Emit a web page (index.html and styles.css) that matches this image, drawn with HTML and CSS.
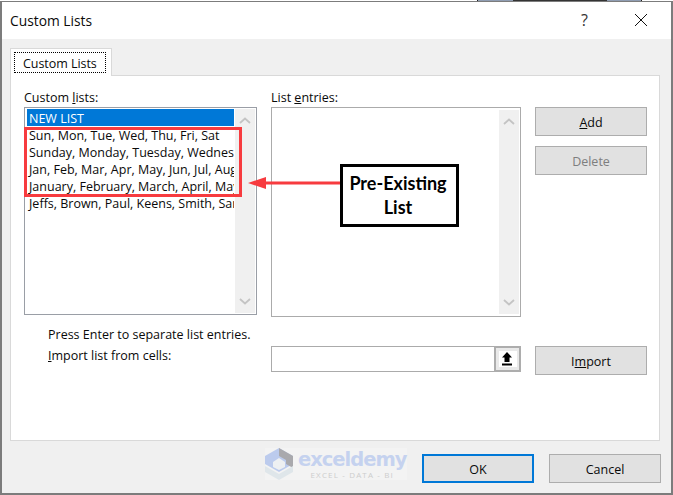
FILE: index.html
```html
<!DOCTYPE html>
<html lang="en">
<head>
<meta charset="utf-8">
<title>Custom Lists</title>
<link rel="stylesheet" href="styles.css">
</head>
<body>
<div class="peek"><span></span></div>
<div class="window">
  <header class="titlebar">
    <span class="title">Custom Lists</span>
    <span class="help">?</span>
    <svg class="close" width="12" height="12" viewBox="0 0 12 12"><path d="M0 0L12 12M12 0L0 12" stroke="#111" stroke-width="1" fill="none"/></svg>
  </header>
  <main class="body">
    <div class="tabstrip"><div class="tab"><span class="tab-focus">Custom Lists</span></div></div>
    <section class="panel">
      <div class="columns">
        <div class="col-lists">
          <label class="field-label">Custom <u>l</u>ists:</label>
          <div class="listbox">
            <ul class="items">
              <li class="selected">NEW LIST</li>
              <li>Sun, Mon, Tue, Wed, Thu, Fri, Sat</li>
              <li>Sunday, Monday, Tuesday, Wednesday, Thursday</li>
              <li>Jan, Feb, Mar, Apr, May, Jun, Jul, Aug, Sep</li>
              <li>January, February, March, April, May, June</li>
              <li>Jeffs, Brown, Paul, Keens, Smith, Sarah</li>
            </ul>
            <div class="scrollbar">
              <svg width="12" height="7" viewBox="0 0 12 7"><path d="M1 6L6 1.5L11 6" stroke="#c4c4c4" stroke-width="1.8" fill="none"/></svg>
              <svg width="12" height="7" viewBox="0 0 12 7"><path d="M1 1L6 5.5L11 1" stroke="#c4c4c4" stroke-width="1.8" fill="none"/></svg>
            </div>
          </div>
        </div>
        <div class="col-entries">
          <label class="field-label">List <u>e</u>ntries:</label>
          <div class="listbox entries">
            <div class="items"></div>
            <div class="scrollbar">
              <svg width="12" height="7" viewBox="0 0 12 7"><path d="M1 6L6 1.5L11 6" stroke="#c4c4c4" stroke-width="1.8" fill="none"/></svg>
              <svg width="12" height="7" viewBox="0 0 12 7"><path d="M1 1L6 5.5L11 1" stroke="#c4c4c4" stroke-width="1.8" fill="none"/></svg>
            </div>
          </div>
        </div>
        <div class="col-buttons">
          <button class="btn"><u>A</u>dd</button>
          <button class="btn disabled">Delete</button>
        </div>
      </div>
      <div class="import-row">
        <div class="import-notes">
          <p>Press Enter to separate list entries.</p>
          <p><u>I</u>mport list from cells:</p>
        </div>
        <div class="range-input">
          <span class="range-btn">
            <span class="range-face">
              <svg width="10" height="14" viewBox="0 0 10 14"><path d="M5 0L10 5.500H7.500V10H2.500V5.500H0Z" fill="#000"/><rect x="0" y="11.500" width="10" height="2" fill="#000"/></svg>
            </span>
          </span>
        </div>
        <button class="btn">I<u>m</u>port</button>
      </div>
    </section>
    <footer class="footer">
      <div class="watermark">
        <svg width="28" height="32" viewBox="0 0 28 32"><path d="M14 0L28 8V16L14 24L0 16V8Z" fill="#bccbed"/><path d="M14 0L28 8V20L21 16V12L14 8Z" fill="#a9a9ad"/><path d="M0 18L14 26L28 18V24L14 32L0 24Z" fill="#dfe6ea"/><path d="M14 10L20 14V19L14 22L8 19V14Z" fill="#eef0f2"/></svg>
        <div class="wm-text">
          <span class="wm-name">exceldemy</span>
          <span class="wm-sub">EXCEL - DATA - BI</span>
        </div>
      </div>
      <button class="btn btn-default">OK</button>
      <button class="btn">Cancel</button>
    </footer>
  </main>
  <div class="highlight"></div>
  <div class="arrow">
    <svg width="94" height="12" viewBox="0 0 94 12"><path d="M0 6L18 0V4.500H94V7.500H18V12Z" fill="#f73b3f"/></svg>
  </div>
  <div class="callout">Pre-Existing<br>List</div>
</div>
</body>
</html>
```
FILE: styles.css
```css
* { box-sizing: border-box; }
html, body { margin: 0; padding: 0; background: #fff; }
body { position: relative; width: 673px; height: 495px; overflow: hidden; padding-top: 1px; font: 12.5px/17px "Open Sans", "Noto Sans", sans-serif; color: #0a0a0a; }
.peek { position: absolute; left: 477px; top: 0; width: 165px; height: 1px; background: #8f9db2; border-left: 1px solid #222; border-right: 1px solid #222; }
.peek span { display: block; width: 94px; height: 1px; margin-left: 35px; background: #333; }
.window { position: relative; width: 673px; height: 494px; border: 2px solid #7c7c7c; border-top-width: 1px; display: flex; flex-direction: column; background: #f0f0f0; }
.titlebar { height: 37px; flex: none; background: #fff; display: flex; align-items: center; padding: 0 0 1px 8px; }
.title { font-size: 13.8px; flex: 1; }
.help { font-size: 16px; margin-right: 47px; color: #333; }
.close { margin-right: 24px; }
.body { flex: 1; display: flex; flex-direction: column; padding: 9px 10px 0 8px; min-height: 0; }
.tabstrip { height: 27px; display: flex; flex: none; }
.tab { width: 102px; height: 28px; background: #fff; border: 1px solid #d9d9d9; border-bottom: 0; padding: 3px 5px 3px 3px; position: relative; z-index: 1; }
.tab-focus { display: block; height: 21px; padding-left: 9px; outline: 1px dotted #000; outline-offset: -1px; line-height: 23px; letter-spacing: -0.05px; }
.panel { flex: none; height: 366px; margin-right: 1px; background: #fff; border: 1px solid #d9d9d9; padding: 14px 11px 0 13px; }
.columns { display: grid; grid-template-columns: 233px 250px 112px; column-gap: 14px; align-items: start; }
.field-label { display: block; height: 17px; line-height: 15px; }
.listbox { display: flex; height: 208px; border: 1px solid #9a9ea6; background: #fff; padding: 1px; }
.entries { height: 210px; border-color: #ababab; padding: 2px 1px; }
.items { list-style: none; flex: 1; min-width: 0; margin: 0 1px 0 0; padding: 0 0 0 1px; overflow: hidden; }
.items li { height: 17px; line-height: 19px; padding-left: 2px; white-space: nowrap; overflow: hidden; }
.items li.selected { background: #0078d7; color: #fff; }
.scrollbar { width: 20px; flex: none; background: #f0f0f0; display: flex; flex-direction: column; justify-content: space-between; align-items: center; padding: 8px 0; }
.col-buttons { display: flex; flex-direction: column; gap: 10px; padding-top: 17px; }
.btn { width: 112px; height: 29px; background: #e1e1e1; border: 1px solid #adadad; font: inherit; color: #0a0a0a; padding: 2px 0 0; }
.btn.disabled { color: #7e7e7e; }
.import-row { display: grid; grid-template-columns: 233px 250px 112px; column-gap: 14px; align-items: start; margin-top: 9px; }
.import-notes { padding: 0 0 0 24px; }
.import-notes p { margin: 0 0 4px; line-height: 17px; }
.range-input { height: 26px; margin-top: 20px; border: 1px solid #ababab; background: #fff; display: flex; justify-content: flex-end; }
.import-row .btn { margin-top: 20px; }
.range-btn { width: 27px; height: 26px; margin: -1px -1px -1px 0; background: #e9e9e9; border: 2px solid #adadad; display: flex; align-items: center; justify-content: center; }
.range-face { width: 18px; height: 16px; padding-right: 1px; background: #fff; display: flex; align-items: center; justify-content: center; }
.footer { display: flex; align-items: flex-start; justify-content: flex-end; padding-top: 13px; gap: 15px; }
.btn-default { border: 2px solid #0078d7; }
.watermark { display: flex; align-items: center; gap: 5px; width: 142px; height: 32px; position: relative; top: -6px; background: #f3f3f3; }
.watermark svg { flex: none; }
.wm-text { display: flex; flex-direction: column; gap: 1px; }
.wm-name { font: bold 19.5px/19px "DejaVu Sans", sans-serif; color: #c5d2ef; letter-spacing: -1px; }
.wm-sub { font-size: 8px; line-height: 9px; letter-spacing: 1.15px; color: #cdcdcd; text-align: center; white-space: nowrap; }
.highlight { position: absolute; left: 22px; top: 125px; width: 218px; height: 70px; border: 3px solid #f73b3f; }
.arrow { position: absolute; left: 246px; top: 175px; line-height: 0; }
.callout { position: absolute; left: 338px; top: 162px; width: 119px; height: 63px; border: 3px solid #000; background: #fff; display: flex; align-items: center; justify-content: center; text-align: center; padding: 0 3px 2px 0; font: bold 18px/24px Lato, "Open Sans", sans-serif; color: #000; }
```
